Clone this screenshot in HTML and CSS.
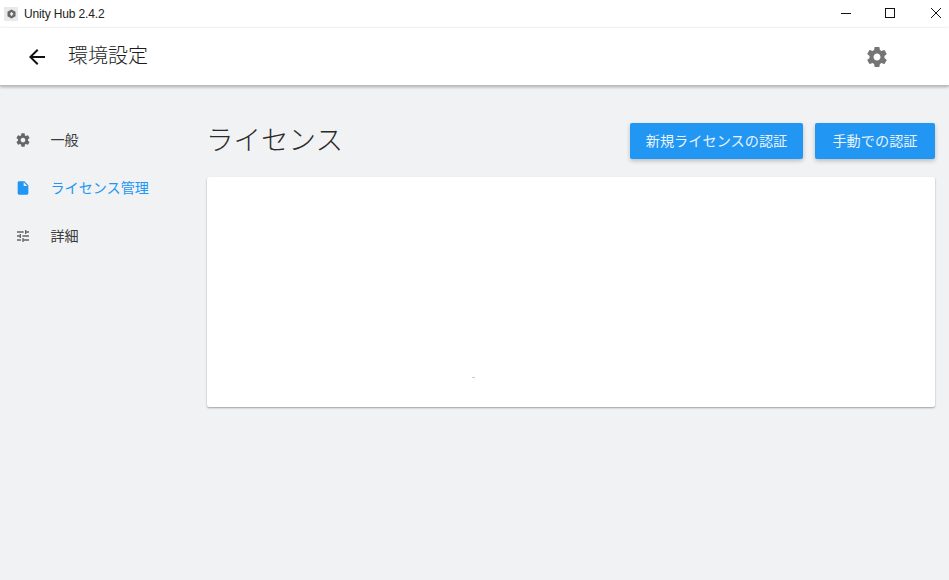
FILE: index.html
```html
<!DOCTYPE html>
<html lang="ja">
<head>
<meta charset="utf-8">
<title>Unity Hub</title>
<link rel="stylesheet" href="styles.css">
</head>
<body>
<div class="app">
  <div class="titlebar">
    <div class="title-left">
      <svg class="app-icon" width="14" height="14" viewBox="0 0 14 14"><rect width="14" height="14" fill="#e9e9e9"/><path d="M7.5 2.5 11.5 4.8v4.4L7.5 11.5 3.5 9.2V4.8z" fill="#666"/><path d="M7.5 4.8 9.5 7 7.5 9.2 5.8 7z" fill="#e9e9e9"/></svg>
      <span class="app-name">Unity Hub 2.4.2</span>
    </div>
    <div class="win-controls">
      <svg class="win-btn" width="26" height="26" viewBox="0 0 26 26"><path d="M8 13.5H18" stroke="#111" fill="none"/></svg>
      <svg class="win-btn" width="26" height="26" viewBox="0 0 26 26"><rect x="8.5" y="8.5" width="9" height="9" stroke="#111" fill="none"/></svg>
      <svg class="win-btn" width="26" height="26" viewBox="0 0 26 26"><path d="M8 8 18 18M18 8 8 18" stroke="#111" fill="none"/></svg>
    </div>
  </div>
  <header class="appbar">
    <div class="appbar-left">
      <svg class="back" width="24" height="24" viewBox="0 0 24 24"><path d="M20 11H7.83l5.59-5.59L12 4l-8 8 8 8 1.41-1.41L7.83 13H20z" fill="#111"/></svg>
      <h1 class="page-title">環境設定</h1>
    </div>
    <svg class="appbar-gear" width="24" height="24" viewBox="0 0 24 24"><path fill="#757575" d="M19.43 12.98c.04-.32.07-.64.07-.98s-.03-.66-.07-.98l2.11-1.65c.19-.15.24-.42.12-.64l-2-3.46c-.12-.22-.39-.3-.61-.22l-2.49 1c-.52-.4-1.08-.73-1.69-.98l-.38-2.65C14.46 2.18 14.25 2 14 2h-4c-.25 0-.46.18-.49.42l-.38 2.65c-.61.25-1.17.59-1.69.98l-2.49-1c-.23-.09-.49 0-.61.22l-2 3.46c-.13.22-.07.49.12.64l2.11 1.65c-.04.32-.07.65-.07.98s.03.66.07.98l-2.11 1.65c-.19.15-.24.42-.12.64l2 3.46c.12.22.39.3.61.22l2.49-1c.52.4 1.08.73 1.69.98l.38 2.65c.03.24.24.42.49.42h4c.25 0 .46-.18.49-.42l.38-2.65c.61-.25 1.17-.59 1.69-.98l2.49 1c.23.09.49 0 .61-.22l2-3.46c.12-.22.07-.49-.12-.64l-2.11-1.65zM12 15.5c-1.93 0-3.5-1.57-3.5-3.5s1.57-3.5 3.5-3.5 3.5 1.57 3.5 3.5-1.57 3.5-3.5 3.5z"/></svg>
  </header>
  <div class="body">
    <nav class="sidebar">
      <a class="nav-item">
        <svg width="16" height="16" viewBox="0 0 24 24"><path fill="#666" d="M19.43 12.98c.04-.32.07-.64.07-.98s-.03-.66-.07-.98l2.11-1.65c.19-.15.24-.42.12-.64l-2-3.46c-.12-.22-.39-.3-.61-.22l-2.49 1c-.52-.4-1.08-.73-1.69-.98l-.38-2.65C14.46 2.18 14.25 2 14 2h-4c-.25 0-.46.18-.49.42l-.38 2.65c-.61.25-1.17.59-1.69.98l-2.49-1c-.23-.09-.49 0-.61.22l-2 3.46c-.13.22-.07.49.12.64l2.11 1.65c-.04.32-.07.65-.07.98s.03.66.07.98l-2.11 1.65c-.19.15-.24.42-.12.64l2 3.46c.12.22.39.3.61.22l2.49-1c.52.4 1.08.73 1.69.98l.38 2.65c.03.24.24.42.49.42h4c.25 0 .46-.18.49-.42l.38-2.65c.61-.25 1.17-.59 1.69-.98l2.49 1c.23.09.49 0 .61-.22l2-3.46c.12-.22.07-.49-.12-.64l-2.11-1.65zM12 15.5c-1.93 0-3.5-1.57-3.5-3.5s1.57-3.5 3.5-3.5 3.5 1.57 3.5 3.5-1.57 3.5-3.5 3.5z"/></svg>
        <span class="nav-label">一般</span>
      </a>
      <a class="nav-item active">
        <svg width="16" height="16" viewBox="0 0 24 24"><path fill="#2196f3" d="M6 2c-1.1 0-2 .9-2 2v16c0 1.1.9 2 2 2h12c1.1 0 2-.9 2-2V8l-6-6H6zm7 7V3.5L18.5 9H13z"/></svg>
        <span class="nav-label">ライセンス管理</span>
      </a>
      <a class="nav-item">
        <svg width="16" height="16" viewBox="0 0 24 24"><path fill="#666" d="M3 17v2h6v-2H3zM3 5v2h10V5H3zm10 16v-2h8v-2h-8v-2h-2v6h2zM7 9v2H3v2h4v2h2V9H7zm14 4v-2H11v2h10zm-6-4h2V7h4V5h-4V3h-2v6z"/></svg>
        <span class="nav-label">詳細</span>
      </a>
    </nav>
    <main class="content">
      <div class="content-head">
        <h2 class="section-title">ライセンス</h2>
        <div class="actions">
          <button class="btn btn-new"><span class="btn-label">新規ライセンスの認証</span></button>
          <button class="btn btn-manual"><span class="btn-label">手動での認証</span></button>
        </div>
      </div>
      <section class="card"><span class="speck"></span></section>
    </main>
  </div>
</div>
</body>
</html>
```
FILE: styles.css
```css
* { box-sizing: border-box; }
html, body { margin: 0; padding: 0; height: 100%; }
body {
  font-family: "Noto Sans CJK JP", "Noto Sans", sans-serif;
  background: #f1f2f4;
  overflow: hidden;
}
.app { display: flex; flex-direction: column; width: 949px; height: 580px; }
.titlebar {
  display: flex; justify-content: space-between; align-items: flex-start;
  height: 28px; background: #fff;
}
.title-left { display: flex; align-items: center; gap: 6px; padding: 5px 0 0 4px; }
.app-icon { display: block; }
.app-name { font-family: "Liberation Sans", sans-serif; font-size: 12px; color: #222; line-height: 18px; letter-spacing: -0.15px; }
.win-controls { display: flex; gap: 19px; }
.win-btn { display: block; }
.win-btn:nth-child(2) { margin-left: -1px; margin-right: 1px; }
.appbar {
  display: flex; justify-content: space-between; align-items: center;
  height: 58px; background: #fff;
  padding: 0 60px 3px 25px;
  border-bottom: 1px solid #bdbdbd;
  box-shadow: 0 1px 3px rgba(0,0,0,.3);
  position: relative;
}
.appbar-left { display: flex; align-items: center; gap: 19px; }
.back { display: block; margin-top: 4px; }
.page-title { margin: 0; font-size: 20px; font-weight: 300; color: #1c1c1c; line-height: 28px; padding-bottom: 1px; }
.appbar-gear { display: block; margin-top: 3px; }
.body { display: flex; flex: 1; min-height: 0; }
.sidebar { width: 207px; flex: none; padding-top: 30px; display: flex; flex-direction: column; }
.nav-item {
  display: flex; align-items: center; gap: 19.5px;
  height: 48px; padding-left: 15px;
  font-size: 14.1px; color: #3a3a3a; font-weight: 400;
}
.nav-item svg { display: block; }
.nav-label { padding-bottom: 2px; line-height: 20px; }
.nav-item.active { color: #2196f3; }
.content { flex: 1; padding: 37px 14px 0 0; min-width: 0; }
.content-head { display: flex; justify-content: space-between; align-items: center; height: 36px; }
.section-title { margin: 0 0 0 -1px; font-size: 27.5px; font-weight: 200; color: #2a2a2a; line-height: 36px; padding-bottom: 6px; }
.actions { display: flex; gap: 12px; }
.btn {
  height: 36px; border: 0; border-radius: 2px;
  background: #2196f3; color: #e8f3fd;
  font-family: inherit; font-size: 14.2px; font-weight: 400;
  box-shadow: 0 2px 4px rgba(0,0,0,.22);
  padding: 0;
}
.btn-label { display: block; line-height: 20px; padding-bottom: 3px; }
.btn-new { width: 173px; }
.btn-manual { width: 120px; }
.card {
  position: relative;
  height: 230px; margin-top: 18px;
  background: #fff; border-radius: 2px;
  box-shadow: 0 1px 2px rgba(0,0,0,.35);
}
.speck { position: absolute; left: 265px; top: 200px; width: 3px; height: 1px; background: #bcd; }
```
